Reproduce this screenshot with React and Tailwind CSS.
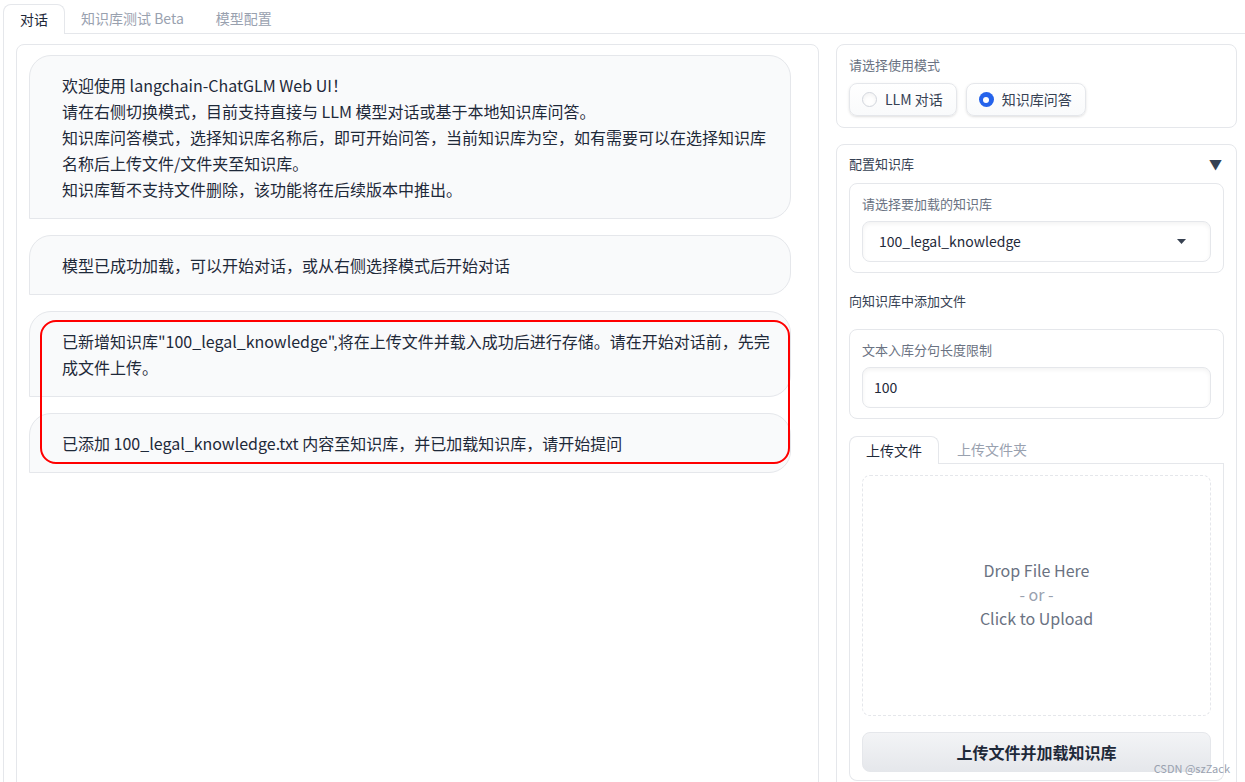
import React from "react";

const font = "font-['Noto_Sans_CJK_SC','Liberation_Sans',sans-serif]";

const Bubble = ({ children }) => (
  <div className="w-[762px] rounded-[22px] rounded-bl-none border border-gray-200 bg-gray-50 py-[16px] pl-8 pr-4 text-[16px] leading-[26px] text-gray-800">
    {children}
  </div>
);

const ChatBox = () => (
  <div className="relative h-[760px] w-[803px] shrink-0 rounded-lg border border-gray-200 p-3 pt-[10px]">
    <div className="flex flex-col gap-[16px]">
      <Bubble>
        欢迎使用 langchain-ChatGLM Web UI！
        <br />
        请在右侧切换模式，目前支持直接与 LLM 模型对话或基于本地知识库问答。
        <br />
        知识库问答模式，选择知识库名称后，即可开始问答，当前知识库为空，如有需要可以在选择知识库
        <br />
        名称后上传文件/文件夹至知识库。
        <br />
        知识库暂不支持文件删除，该功能将在后续版本中推出。
      </Bubble>
      <Bubble>模型已成功加载，可以开始对话，或从右侧选择模式后开始对话</Bubble>
      <Bubble>
        已新增知识库"100_legal_knowledge",将在上传文件并载入成功后进行存储。请在开始对话前，先完
        <br />
        成文件上传。
      </Bubble>
      <Bubble>已添加 100_legal_knowledge.txt 内容至知识库，并已加载知识库，请开始提问</Bubble>
    </div>
    {/* red annotation frame */}
    <div className="pointer-events-none absolute left-[23px] top-[275px] h-[144px] w-[750px] rounded-[16px] border-2 border-[#ff0000]" />
  </div>
);

const Radio = ({ label, checked }) => (
  <label className="flex h-[33px] items-center gap-2 rounded-lg border border-gray-200 bg-gradient-to-b from-white to-gray-50 pl-[12px] pr-[13px] text-[14px] text-gray-700 shadow-sm">
    {checked ? (
      <span className="flex h-[15px] w-[15px] items-center justify-center rounded-full bg-[#2563eb]">
        <span className="h-[6px] w-[6px] rounded-full bg-white" />
      </span>
    ) : (
      <span className="h-[15px] w-[15px] rounded-full border border-gray-300 bg-white shadow-inner" />
    )}
    {label}
  </label>
);

const Field = ({ label, children }) => (
  <div className="rounded-lg border border-gray-200 px-3 pb-[10px] pt-[10px]">
    <div className="mb-[7px] text-[13px] leading-[20px] text-gray-500">{label}</div>
    {children}
  </div>
);

const RightPanel = () => (
  <div className="flex w-[401px] shrink-0 flex-col gap-[16px]">
    <div className="rounded-lg border border-gray-200 px-3 pb-[11px] pt-[10px]">
      <div className="mb-[8px] text-[13px] leading-[20px] text-gray-500">请选择使用模式</div>
      <div className="flex gap-[9px]">
        <Radio label="LLM 对话" />
        <Radio label="知识库问答" checked />
      </div>
    </div>

    <div className="h-[680px] shrink-0 rounded-lg border border-gray-200 px-3 pt-[9px]">
      <div className="mb-[9px] flex items-center justify-between text-[13px] leading-[20px] text-gray-700">
        <span>配置知识库</span>
        <span className="pr-[2px] text-[13px] text-gray-700">▼</span>
      </div>

      <Field label="请选择要加载的知识库">
        <div className="flex h-[41px] items-center justify-between rounded-lg border border-gray-200 bg-white pl-4 pr-[24px] text-[14px] text-gray-800 shadow-inner">
          <span>100_legal_knowledge</span>
          <svg width="9" height="5" viewBox="0 0 9 5">
            <path d="M0 0h9L4.5 5z" fill="#374151" />
          </svg>
        </div>
      </Field>

      <div className="my-[18px] text-[13px] leading-[20px] text-gray-700">向知识库中添加文件</div>

      <Field label="文本入库分句长度限制">
        <div className="flex h-[41px] items-center rounded-lg border border-gray-200 bg-white pl-[11px] text-[14px] text-gray-800 shadow-inner">
          100
        </div>
      </Field>

      <div className="mt-[17px]">
        <div className="flex h-[28px] items-end border-b border-gray-200 text-[14px]">
          <div className="-mb-px flex h-[28px] items-center rounded-t-lg border border-b-0 border-gray-200 bg-white px-4 text-gray-800">
            上传文件
          </div>
          <div className="flex h-[27px] items-center px-[18px] text-gray-400">上传文件夹</div>
        </div>
        <div className="rounded-b-lg border border-t-0 border-gray-200 px-3 pb-[8px] pt-[11px]">
          <div className="flex h-[241px] flex-col items-center justify-center rounded-lg border border-dashed border-gray-200 pb-[4px] text-[16px] leading-[24px]">
            <span className="text-gray-500">Drop File Here</span>
            <span className="text-gray-400">- or -</span>
            <span className="text-gray-500">Click to Upload</span>
          </div>
          <button className="mt-[16px] flex h-[40px] w-full items-center justify-center rounded-lg border border-gray-200 bg-gradient-to-b from-gray-100 to-gray-200 text-[16px] font-bold text-gray-800">
            上传文件并加载知识库
          </button>
        </div>
      </div>
    </div>
  </div>
);

const App = () => (
  <div className={`relative h-[782px] overflow-hidden bg-white pl-[3px] ${font}`}>
    <div className="flex h-[34px] items-end border-b border-gray-200 text-[14px]">
      <div className="-mb-px flex h-[30px] items-center rounded-t-lg border border-b-0 border-gray-200 bg-white px-4 text-gray-800">
        对话
      </div>
      <div className="flex h-[29px] items-center px-4 text-gray-400">知识库测试 Beta</div>
      <div className="flex h-[29px] items-center px-4 text-gray-400">模型配置</div>
    </div>
    <div className="flex h-[760px] gap-[17px] border-l border-gray-200 pl-3 pt-[10px]">
      <ChatBox />
      <RightPanel />
    </div>
    <div className="absolute bottom-[6px] right-[15px] text-[11px] text-gray-400">CSDN @szZack</div>
  </div>
);

export default App;
